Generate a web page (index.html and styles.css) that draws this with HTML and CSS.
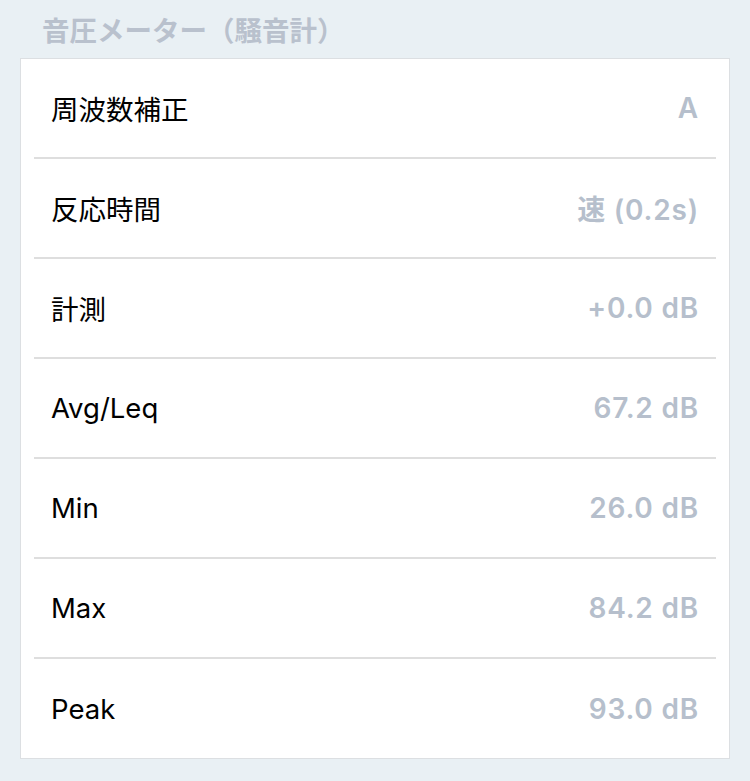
FILE: index.html
```html
<!DOCTYPE html>
<html lang="ja">
<head>
    <meta charset="UTF-8">
    <meta name="viewport" content="width=device-width, initial-scale=1.0">
    <title>音圧メーター</title>
    <link rel="stylesheet" href="styles.css">
</head>
<body>
    <h2 class="section-title">音圧メーター（騒音計）</h2>
    <div class="card">
        <div class="row">
            <span class="label">周波数補正</span>
            <span class="value">A</span>
        </div>
        <div class="row">
            <span class="label">反応時間</span>
            <span class="value">速 (0.2s)</span>
        </div>
        <div class="row">
            <span class="label">計測</span>
            <span class="value">+0.0 dB</span>
        </div>
        <div class="row">
            <span class="label">Avg/Leq</span>
            <span class="value">67.2 dB</span>
        </div>
        <div class="row">
            <span class="label">Min</span>
            <span class="value">26.0 dB</span>
        </div>
        <div class="row">
            <span class="label">Max</span>
            <span class="value">84.2 dB</span>
        </div>
        <div class="row">
            <span class="label">Peak</span>
            <span class="value">93.0 dB</span>
        </div>
    </div>
</body>
</html>
```

FILE: styles.css
```css
* {
    margin: 0;
    padding: 0;
    box-sizing: border-box;
}

body {
    font-family: 'Inter', 'Noto Sans CJK JP', sans-serif;
    background: #e9f0f4;
    color: #000000;
    width: 750px;
    height: 781px;
    overflow: hidden;
}

.section-title {
    font-size: 27.5px;
    font-weight: 700;
    color: #b9c1cd;
    height: 58px;
    line-height: 62px;
    padding-left: 42px;
}

.card {
    background: #ffffff;
    border: 1px solid #dcdfe2;
    margin: 0 20px;
    padding: 0 13px;
}

.row {
    height: 100px;
    display: flex;
    justify-content: space-between;
    align-items: center;
    padding: 0 17px;
    border-bottom: 2px solid #dedede;
}

.row:last-child {
    border-bottom: none;
    height: 99px;
}

.label {
    font-size: 27.5px;
}

.value {
    font-size: 28px;
    font-weight: 600;
    letter-spacing: 0.8px;
    color: #b6bfcc;
}
```
